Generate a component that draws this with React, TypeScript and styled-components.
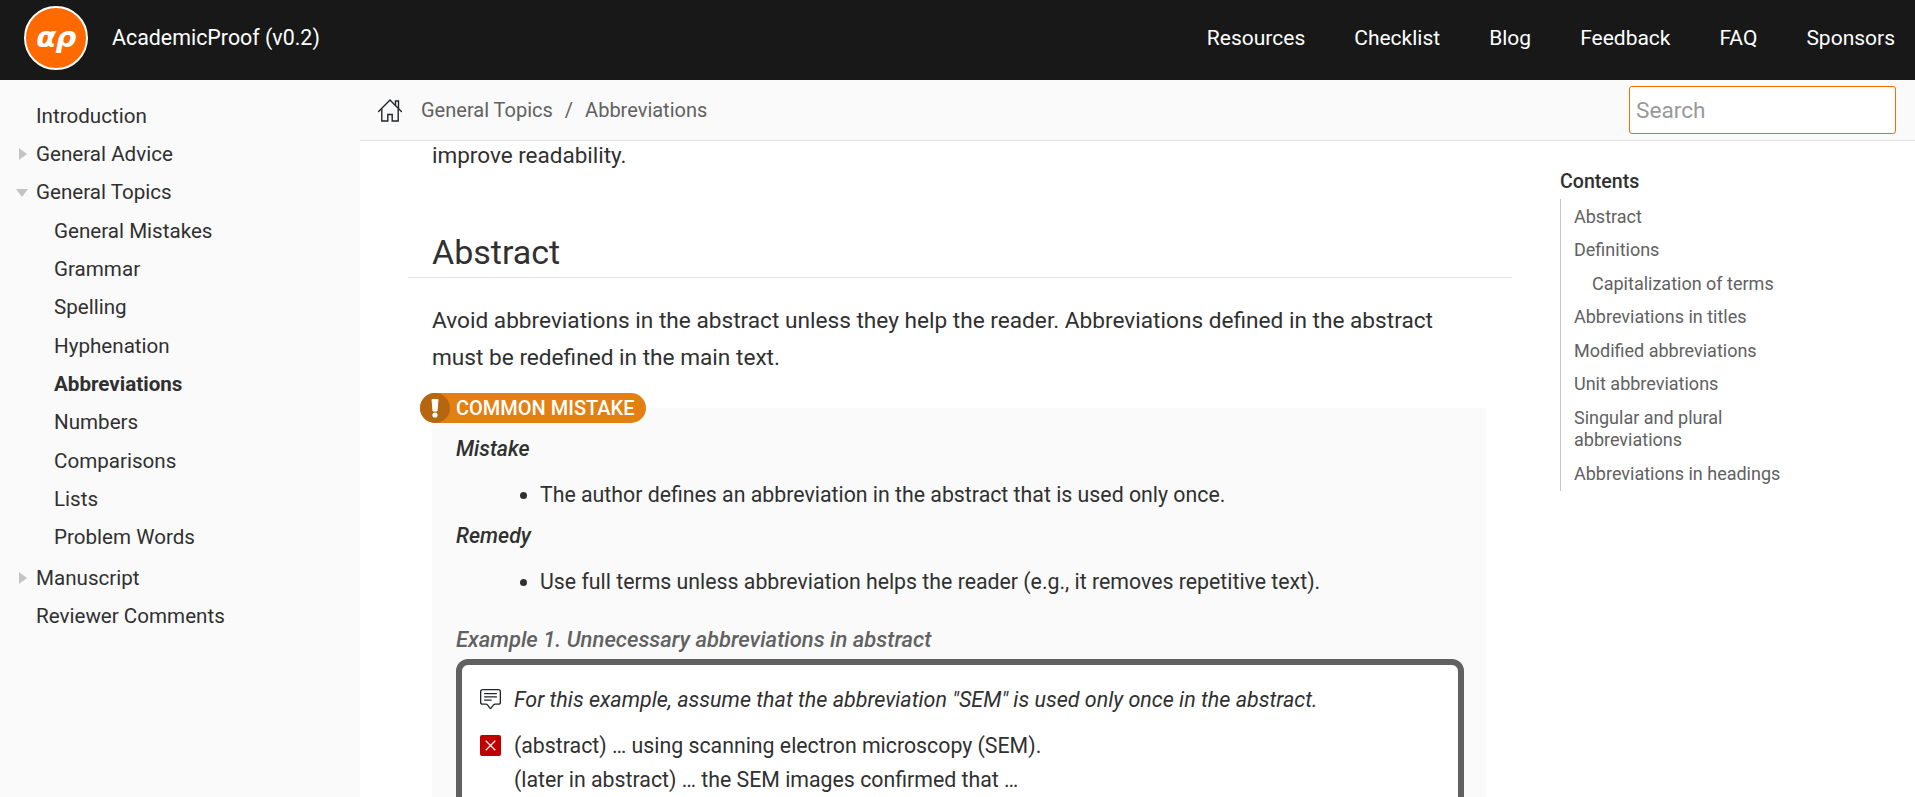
import React from 'react';
import styled, { createGlobalStyle } from 'styled-components';
import { BsChatSquareText } from 'react-icons/bs';

const GlobalStyle = createGlobalStyle`
  html, body {
    margin: 0;
    height: 100%;
    overflow: hidden;
    background: #fff;
  }
  body {
    font-family: Roboto, "Liberation Sans", sans-serif;
    font-size: 20px;
    color: #303030;
  }
  * {
    box-sizing: border-box;
  }
`;

const Page = styled.div`
  height: 797px;
  display: flex;
  flex-direction: column;
  overflow: hidden;
`;

const TopBar = styled.header`
  height: 80px;
  flex: none;
  display: flex;
  align-items: center;
  padding: 0 20px 5px 24px;
  background: #181818;
  color: #fff;
`;

const Logo = styled.div`
  width: 64px;
  height: 64px;
  flex: none;
  display: flex;
  align-items: center;
  justify-content: center;
  border: 2px solid #fff;
  border-radius: 50%;
  background: #ff6a00;
  font-family: "DejaVu Sans", sans-serif;
  font-size: 29px;
  font-weight: 700;
  font-style: italic;
  letter-spacing: -0.5px;
  padding: 0 0 2px 0;
`;

const Brand = styled.span`
  margin-left: 24px;
  flex: 1;
  font-size: 21.4px;
`;

const TopNav = styled.nav`
  display: flex;
  gap: 49px;
  font-size: 21px;
`;

const Body = styled.div`
  flex: 1;
  display: flex;
  min-height: 0;
`;

const Sidebar = styled.aside`
  width: 360px;
  flex: none;
  padding: 16.9px 0 0 36px;
  background: #fafafa;
  font-size: 20.6px;
`;

const NavItem = styled.div<{ $nested?: boolean; $active?: boolean; $gap?: boolean }>`
  position: relative;
  height: 38.3px;
  line-height: 38.3px;
  margin-left: ${(p) => (p.$nested ? '18px' : '0')};
  margin-top: ${(p) => (p.$gap ? '2.5px' : '0')};
  font-weight: ${(p) => (p.$active ? 700 : 400)};
`;

const Caret = styled.span<{ $open?: boolean }>`
  position: absolute;
  width: 0;
  height: 0;
  ${(p) =>
    p.$open
      ? `left: -20px; top: 16px; border-left: 6px solid transparent; border-right: 6px solid transparent; border-top: 8px solid #c4c4c4;`
      : `left: -17px; top: 13px; border-top: 6px solid transparent; border-bottom: 6px solid transparent; border-left: 8px solid #c4c4c4;`}
`;

const Main = styled.main`
  flex: 1;
  min-width: 0;
  display: flex;
  flex-direction: column;
`;

const CrumbBar = styled.div`
  height: 61px;
  flex: none;
  display: flex;
  align-items: center;
  padding: 0 19px 0 18px;
  background: #fafafa;
  border-bottom: 1px solid #e1e1e1;
  color: #616161;
`;

const HomeIcon = styled.svg`
  width: 24px;
  height: 23px;
  margin-right: 19px;
  fill: none;
  stroke: #212529;
  stroke-width: 1.4;
`;

const CrumbSep = styled.span`
  margin: 0 12px;
`;

const Search = styled.input`
  width: 267px;
  height: 48px;
  margin-left: auto;
  padding: 0 6px;
  border: 1px solid #ff6a00;
  border-radius: 3px;
  background: #fff;
  font: inherit;
  font-size: 22.6px;
  outline: none;
  &::placeholder {
    color: #999;
  }
`;

const Columns = styled.div`
  flex: 1;
  display: flex;
  min-height: 0;
  overflow: hidden;
`;

const Article = styled.article`
  width: 1152px;
  flex: none;
  padding: 0 0 0 48px;
  line-height: 36px;
`;

const Para = styled.p`
  margin: -4px 0 0;
  padding: 0 24px;
  font-size: 22.5px;
`;

const Heading = styled.h2`
  margin: 55px 0 0;
  padding: 0 24px;
  height: 50px;
  font-size: 34px;
  font-weight: 400;
  line-height: 49px;
  border-bottom: 1px solid #e1e1e1;
`;

const Lead = styled.p`
  margin: 25px 0 0;
  padding: 0 60px 0 24px;
  font-size: 22.65px;
  line-height: 36.5px;
`;

const Callout = styled.section`
  position: relative;
  width: 1054px;
  margin: 32px 0 0 24px;
  padding: 26px 24px 0;
  background: #fafafa;
  font-size: 21.3px;
`;

const Badge = styled.div`
  position: absolute;
  left: -12px;
  top: -15px;
  height: 30px;
  display: flex;
  align-items: center;
  border-radius: 15px;
  background: #e38013;
  color: #fff;
  font-size: 20px;
  font-weight: 500;
  padding-right: 11px;
`;

const BadgeIcon = styled.span`
  width: 30px;
  height: 30px;
  margin-right: 6px;
  border-radius: 50%;
  display: flex;
  align-items: center;
  justify-content: center;
  background: #b5660f;
`;

const Term = styled.div`
  font-style: italic;
  font-weight: 500;
  line-height: 30px;
`;

const Bullets = styled.ul`
  margin: 13px 0 8px;
  padding: 0 0 0 84px;
  line-height: 36px;
`;

const ExampleTitle = styled.div`
  margin-top: 24.5px;
  color: #616161;
  font-size: 22px;
  font-style: italic;
  font-weight: 500;
  line-height: 30px;
`;

const ExampleBox = styled.div`
  margin: 4px 0 0;
  padding: 18px 18px 0;
  width: 1008px;
  height: 200px;
  border: 6px solid #616161;
  border-radius: 12px;
  background: #fff;
`;

const ExampleRow = styled.div`
  display: flex;
  gap: 12px;
  margin-bottom: 12px;
  line-height: 34px;
`;

const RowIcon = styled.span`
  width: 22px;
  flex: none;
  padding-top: 6px;
  display: flex;
  align-items: flex-start;
`;

const NoteIcon = styled(BsChatSquareText)`
  width: 21px;
  height: 21px;
  color: #212529;
`;

const NoteText = styled.em`
  font-size: 21.5px;
`;

const Cross = styled.svg`
  width: 21px;
  height: 21px;
`;

const Toc = styled.aside`
  flex: 1;
  padding: 26px 0 0 48px;
`;

const TocTitle = styled.div`
  font-size: 19.6px;
  font-weight: 500;
  line-height: 30px;
`;

const TocList = styled.div`
  width: 226px;
  margin-top: 2px;
  padding: 1px 0 0 13px;
  border-left: 1px solid #c8c8c8;
`;

const TocItem = styled.div<{ $nested?: boolean }>`
  padding: 5.5px 0 5.5px ${(p) => (p.$nested ? '18px' : '0')};
  font-size: 18px;
  line-height: 22.5px;
  color: #616161;
`;

const topNav = ['Resources', 'Checklist', 'Blog', 'Feedback', 'FAQ', 'Sponsors'];
const subTopics = ['General Mistakes', 'Grammar', 'Spelling', 'Hyphenation', 'Abbreviations', 'Numbers', 'Comparisons', 'Lists', 'Problem Words'];
const tocItems = ['Abstract', 'Definitions', 'Capitalization of terms', 'Abbreviations in titles', 'Modified abbreviations', 'Unit abbreviations', 'Singular and plural abbreviations', 'Abbreviations in headings'];

const App = () => (
  <Page>
    <GlobalStyle />
    <TopBar>
      <Logo>αρ</Logo>
      <Brand>AcademicProof (v0.2)</Brand>
      <TopNav>
        {topNav.map((item) => (
          <span key={item}>{item}</span>
        ))}
      </TopNav>
    </TopBar>
    <Body>
      <Sidebar>
        <NavItem>Introduction</NavItem>
        <NavItem>
          <Caret />
          General Advice
        </NavItem>
        <NavItem>
          <Caret $open />
          General Topics
        </NavItem>
        {subTopics.map((item) => (
          <NavItem key={item} $nested $active={item === 'Abbreviations'}>
            {item}
          </NavItem>
        ))}
        <NavItem $gap>
          <Caret />
          Manuscript
        </NavItem>
        <NavItem>Reviewer Comments</NavItem>
      </Sidebar>
      <Main>
        <CrumbBar>
          <HomeIcon viewBox="0 0 24 23">
            <path d="M0.6 12.4L12 1l11.4 11.4" strokeLinecap="round" />
            <path d="M3.8 10v12h6V15.5h4.4V22h6V10" />
            <path d="M17.5 6V2h3v7" />
          </HomeIcon>
          <span>General Topics</span>
          <CrumbSep>/</CrumbSep>
          <span>Abbreviations</span>
          <Search placeholder="Search" />
        </CrumbBar>
        <Columns>
          <Article>
            <Para>improve readability.</Para>
            <Heading>Abstract</Heading>
            <Lead>
              Avoid abbreviations in the abstract unless they help the reader. Abbreviations defined in the abstract must be redefined in the main text.
            </Lead>
            <Callout>
              <Badge>
                <BadgeIcon>
                  <svg width="8" height="20" viewBox="0 0 8 20">
                    <path d="M1 1.5h6l-1 11.5h-4z" fill="#fff" stroke="#fff" strokeLinejoin="round" />
                    <circle cx="4" cy="17" r="2.6" fill="#fff" />
                  </svg>
                </BadgeIcon>
                COMMON MISTAKE
              </Badge>
              <Term>Mistake</Term>
              <Bullets>
                <li>The author defines an abbreviation in the abstract that is used only once.</li>
              </Bullets>
              <Term>Remedy</Term>
              <Bullets>
                <li>Use full terms unless abbreviation helps the reader (e.g., it removes repetitive text).</li>
              </Bullets>
              <ExampleTitle>Example 1. Unnecessary abbreviations in abstract</ExampleTitle>
              <ExampleBox>
                <ExampleRow>
                  <RowIcon>
                    <NoteIcon />
                  </RowIcon>
                  <NoteText>For this example, assume that the abbreviation "SEM" is used only once in the abstract.</NoteText>
                </ExampleRow>
                <ExampleRow>
                  <RowIcon>
                    <Cross viewBox="0 0 22 22">
                      <rect width="22" height="22" rx="2" fill="#c00000" />
                      <path d="M6 6l10 10M16 6L6 16" stroke="#fff" strokeWidth="1.3" />
                    </Cross>
                  </RowIcon>
                  <div>
                    (abstract) … using scanning electron microscopy (SEM).
                    <br />
                    (later in abstract) … the SEM images confirmed that …
                  </div>
                </ExampleRow>
              </ExampleBox>
            </Callout>
          </Article>
          <Toc>
            <TocTitle>Contents</TocTitle>
            <TocList>
              {tocItems.map((item) => (
                <TocItem key={item} $nested={item === 'Capitalization of terms'}>
                  {item}
                </TocItem>
              ))}
            </TocList>
          </Toc>
        </Columns>
      </Main>
    </Body>
  </Page>
);

export default App;
